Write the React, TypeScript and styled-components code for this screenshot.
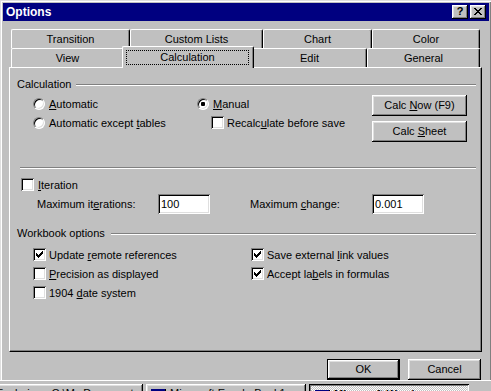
import * as React from 'react'
import styled, { createGlobalStyle, css } from 'styled-components'

const GlobalStyle = createGlobalStyle`
  html, body {
    margin: 0;
    padding: 0;
    background: #c0c0c0;
  }
  body {
    font-family: "Liberation Sans", Arial, sans-serif;
    font-size: 11px;
    color: #000;
  }
`

const raised = css`
  box-shadow: inset -1px -1px #000, inset 1px 1px #fff, inset -2px -2px #808080, inset 2px 2px #dfdfdf;
`

const sunken = css`
  box-shadow: inset 1px 1px #808080, inset -1px -1px #fff, inset 2px 2px #000, inset -2px -2px #dfdfdf;
`

const Screen = styled.div`
  width: 491px;
  height: 391px;
  overflow: hidden;
  display: flex;
  flex-direction: column;
`

const Window = styled.div`
  flex: none;
  width: 492px;
  height: 380px;
  box-sizing: border-box;
  overflow: hidden;
  background: #c0c0c0;
  border-style: solid;
  border-width: 1px 1px 0 1px;
  border-color: #dfdfdf #000 transparent #dfdfdf;
  box-shadow: inset 1px 1px #fff, inset -1px 0 #808080;
  padding: 2px 2px 0 2px;
  display: flex;
  flex-direction: column;
`

const TitleBar = styled.div`
  height: 18px;
  flex: none;
  background: #000080;
  color: #fff;
  display: flex;
  align-items: center;
  padding: 0 3px;
  font-weight: bold;
  font-size: 12px;
`

const TitleText = styled.span`
  flex: 1;
`

const CaptionButtons = styled.div`
  display: flex;
  gap: 2px;
`

const CaptionButton = styled.div`
  width: 16px;
  height: 14px;
  background: #c0c0c0;
  ${raised};
  color: #000;
  display: flex;
  align-items: center;
  justify-content: center;
  font-size: 11px;
  font-weight: bold;
  line-height: 1;
  padding-bottom: 1px;
  box-sizing: border-box;
`

const DialogBody = styled.div`
  flex: 1;
  padding: 8px 0 0 6px;
  display: flex;
  flex-direction: column;
`

const TabStrip = styled.div`
  margin-left: 2px;
  width: 469px;
  display: flex;
  flex-direction: column;
`

const TabRow = styled.div`
  display: flex;
  height: 19px;
`

const Tab = styled.div<{ $width: number; $selected?: boolean }>`
  flex: none;
  width: ${p => p.$width}px;
  height: 19px;
  box-sizing: border-box;
  background: #c0c0c0;
  border-top: 1px solid #fff;
  border-left: 1px solid #fff;
  border-right: 1px solid #000;
  border-radius: 2px 2px 0 0;
  box-shadow: inset -1px 0 #808080;
  display: flex;
  justify-content: center;
  padding-top: 3px;
  line-height: 13px;

  ${p =>
    p.$selected &&
    css`
      position: relative;
      z-index: 2;
      height: 22px;
      margin: -2px -2px 0 -2px;
      width: ${p.$width + 4}px;
      padding: 3px 4px 0 3px;
    `}
`

const FocusRect = styled.div`
  flex: 1;
  height: 15px;
  box-sizing: border-box;
  border: 1px dotted #000;
  text-align: center;
  line-height: 13px;
`

const Panel = styled.div`
  width: 473px;
  height: 285px;
  box-sizing: border-box;
  border-style: solid;
  border-width: 1px;
  border-color: #fff #000 #000 #fff;
  box-shadow: inset -1px -1px #808080;
  padding: 9px 5px 0 7px;
  display: flex;
  flex-direction: column;
`

const GroupHeader = styled.div<{ $gap?: number; $top?: number }>`
  display: flex;
  align-items: center;
  height: 14px;
  line-height: 14px;
  margin-top: ${p => p.$top ?? 0}px;

  & > i {
    flex: 1;
    margin-left: ${p => p.$gap ?? 5}px;
    margin-top: 2px;
  }
`

const Etched = styled.i<{ $indent?: number; $top?: number }>`
  display: block;
  height: 0;
  border-top: 1px solid #808080;
  border-bottom: 1px solid #fff;
  margin-left: ${p => p.$indent ?? 0}px;
  margin-top: ${p => p.$top ?? 0}px;
`

const CalcBody = styled.div`
  display: flex;
  margin-top: 3px;
`

const Column = styled.div<{ $width: number; $indent?: number; $gap?: number; $top?: number }>`
  flex: none;
  width: ${p => p.$width}px;
  margin-left: ${p => p.$indent ?? 0}px;
  padding-top: ${p => p.$top ?? 0}px;
  display: flex;
  flex-direction: column;
  gap: ${p => p.$gap ?? 0}px;
`

const OptionRow = styled.label<{ $indent?: number; $top?: number }>`
  display: flex;
  align-items: center;
  height: 19px;
  gap: 4px;
  margin-left: ${p => p.$indent ?? 0}px;
  margin-top: ${p => p.$top ?? 0}px;
  white-space: nowrap;
`

const RadioCircle = styled.span`
  flex: none;
  width: 12px;
  height: 12px;
  box-sizing: border-box;
  border-radius: 50%;
  background: #fff;
  border: 1px solid;
  border-color: #808080 #fff #fff #808080;
  box-shadow: inset 1px 1px #000, inset -1px -1px #dfdfdf;
  display: flex;
  align-items: center;
  justify-content: center;
`

const RadioDot = styled.span`
  width: 4px;
  height: 4px;
  border-radius: 1px;
  background: #000;
`

const CheckSquare = styled.span`
  flex: none;
  width: 13px;
  height: 13px;
  box-sizing: border-box;
  background: #fff;
  ${sunken};
  display: flex;
  align-items: center;
  justify-content: center;
  margin-right: -1px;
`

const Key = styled.span`
  text-decoration: underline;
  text-underline-offset: 1px;
`

const PushButton = styled.div<{ $width: number; $default?: boolean }>`
  width: ${p => p.$width}px;
  height: 21px;
  box-sizing: border-box;
  background: #c0c0c0;
  display: flex;
  align-items: center;
  justify-content: center;
  line-height: 13px;
  white-space: pre;
  ${raised};

  ${p =>
    p.$default &&
    css`
      border: 1px solid #000;
    `}
`

const FieldRow = styled.div`
  display: flex;
  align-items: center;
  height: 20px;
`

const FieldLabel = styled.span<{ $width: number; $indent: number }>`
  flex: none;
  width: ${p => p.$width}px;
  margin-left: ${p => p.$indent}px;
`

const TextField = styled.div`
  flex: none;
  width: 52px;
  height: 20px;
  box-sizing: border-box;
  background: #fff;
  ${sunken};
  padding: 0 3px;
  display: flex;
  align-items: center;
`

const OptionsGrid = styled.div`
  display: grid;
  grid-template-columns: 218px auto;
  grid-auto-rows: 19px;
  margin: 5px 0 0 16px;
`

const Footer = styled.div`
  display: flex;
  justify-content: flex-end;
  gap: 8px;
  margin-top: 7px;
  width: 472px;
`

const Taskbar = styled.div`
  flex: none;
  height: 11px;
  box-sizing: border-box;
  border-top: 1px solid #fff;
  padding-top: 3px;
  display: flex;
  gap: 3px;
  overflow: hidden;
`

const TaskButton = styled.div<{ $width: number; $pressed?: boolean; $shift?: number }>`
  flex: none;
  width: ${p => p.$width}px;
  height: 22px;
  box-sizing: border-box;
  margin-left: ${p => p.$shift ?? 0}px;
  padding: 3px 4px 0;
  display: flex;
  align-items: flex-start;
  gap: 4px;
  white-space: nowrap;
  overflow: hidden;
  line-height: 13px;
  background: #c0c0c0;
  ${raised};

  ${p =>
    p.$pressed &&
    css`
      font-weight: bold;
      background: conic-gradient(#fff 25%, #c0c0c0 0 50%, #fff 0 75%, #c0c0c0 0) 0 0 / 2px 2px;
      box-shadow: inset 1px 1px #000, inset -1px -1px #fff, inset 2px 2px #808080, inset -2px -2px #dfdfdf;
      padding: 4px 4px 0 5px;
    `}
`

const checkPixels = [
  [6, 0, 1], [5, 1, 2], [0, 2, 1], [4, 2, 3], [0, 3, 2], [3, 3, 3], [0, 4, 5], [1, 5, 3], [2, 6, 1],
]

const closePixels = [
  [0, 0, 2], [6, 0, 2], [1, 1, 2], [5, 1, 2], [2, 2, 4], [3, 3, 2], [2, 4, 4], [1, 5, 2], [5, 5, 2], [0, 6, 2], [6, 6, 2],
]

const PixelGlyph = ({ pixels, w, h }: { pixels: number[][]; w: number; h: number }) => (
  <svg width={w} height={h} viewBox={`0 0 ${w} ${h}`} shapeRendering="crispEdges">
    {pixels.map(([x, y, len], i) => (
      <rect key={i} x={x} y={y} width={len} height={1} fill="#000" />
    ))}
  </svg>
)

type OptionProps = { checked?: boolean; indent?: number; top?: number; children: React.ReactNode }

const Radio = ({ checked, indent, top, children }: OptionProps) => (
  <OptionRow $indent={indent} $top={top}>
    <RadioCircle>{checked && <RadioDot />}</RadioCircle>
    <span>{children}</span>
  </OptionRow>
)

const Check = ({ checked, indent, top, children }: OptionProps) => (
  <OptionRow $indent={indent} $top={top}>
    <CheckSquare>{checked && <PixelGlyph pixels={checkPixels} w={7} h={7} />}</CheckSquare>
    <span>{children}</span>
  </OptionRow>
)

const TaskIcon = ({ color }: { color: string }) => (
  <svg width={16} height={16} viewBox="0 0 16 16" shapeRendering="crispEdges">
    <rect x={1} y={2} width={14} height={12} fill={color} stroke="#000" />
    <rect x={1} y={2} width={14} height={3} fill="#000080" />
  </svg>
)

const backRow = [
  { label: 'Transition', width: 119 },
  { label: 'Custom Lists', width: 133 },
  { label: 'Chart', width: 109 },
  { label: 'Color', width: 108 },
]

const frontRow = [
  { label: 'View', width: 113 },
  { label: 'Calculation', width: 128, selected: true },
  { label: 'Edit', width: 115 },
  { label: 'General', width: 113 },
]

export default function App() {
  return (
    <>
      <GlobalStyle />
      <Screen>
        <Window>
          <TitleBar>
            <TitleText>Options</TitleText>
            <CaptionButtons>
              <CaptionButton>?</CaptionButton>
              <CaptionButton>
                <PixelGlyph pixels={closePixels} w={8} h={7} />
              </CaptionButton>
            </CaptionButtons>
          </TitleBar>

          <DialogBody>
            <TabStrip>
              <TabRow>
                {backRow.map(t => (
                  <Tab key={t.label} $width={t.width}>{t.label}</Tab>
                ))}
              </TabRow>
              <TabRow>
                {frontRow.map(t => (
                  <Tab key={t.label} $width={t.width} $selected={t.selected}>
                    {t.selected ? <FocusRect>{t.label}</FocusRect> : t.label}
                  </Tab>
                ))}
              </TabRow>
            </TabStrip>

            <Panel>
              <GroupHeader>
                <span>Calculation</span>
                <Etched />
              </GroupHeader>

              <CalcBody>
                <Column $width={164} $indent={16}>
                  <Radio><Key>A</Key>utomatic</Radio>
                  <Radio>Automatic except <Key>t</Key>ables</Radio>
                </Column>
                <Column $width={175}>
                  <Radio checked><Key>M</Key>anual</Radio>
                  <Check indent={14}>Recalc<Key>u</Key>late before save</Check>
                </Column>
                <Column $width={95} $gap={5} $top={1}>
                  <PushButton $width={95}><span>Calc <Key>N</Key>ow (F9)</span></PushButton>
                  <PushButton $width={95}><span>Calc <Key>S</Key>heet</span></PushButton>
                </Column>
              </CalcBody>

              <Etched $indent={3} $top={25} />

              <Check indent={4} top={6}>
                <span style={{ marginLeft: 1 }}><Key>I</Key>teration</span>
              </Check>
              <FieldRow>
                <FieldLabel $width={121} $indent={20}>Maximum it<Key>e</Key>rations:</FieldLabel>
                <TextField>100</TextField>
                <FieldLabel $width={122} $indent={40}>Maximum <Key>c</Key>hange:</FieldLabel>
                <TextField>0.001</TextField>
              </FieldRow>

              <GroupHeader $gap={6} $top={12}>
                <span>Workbook options</span>
                <Etched />
              </GroupHeader>

              <OptionsGrid>
                <Check checked>Update <Key>r</Key>emote references</Check>
                <Check checked>Save external <Key>l</Key>ink values</Check>
                <Check><Key>P</Key>recision as displayed</Check>
                <Check checked>Accept la<Key>b</Key>els in formulas</Check>
                <Check>1904 <Key>d</Key>ate system</Check>
              </OptionsGrid>
            </Panel>

            <Footer>
              <PushButton $width={73} $default>OK</PushButton>
              <PushButton $width={73}>Cancel</PushButton>
            </Footer>
          </DialogBody>
        </Window>

        <Taskbar>
          <TaskButton $width={164} $shift={-21}>
            <TaskIcon color="#ffff80" />
            <span>Exploring - C:\My Documents</span>
          </TaskButton>
          <TaskButton $width={160}>
            <TaskIcon color="#fff" />
            <span>Microsoft Excel - Book1</span>
          </TaskButton>
          <TaskButton $width={160} $pressed>
            <TaskIcon color="#fff" />
            <span>Microsoft Word</span>
          </TaskButton>
        </Taskbar>
      </Screen>
    </>
  )
}
